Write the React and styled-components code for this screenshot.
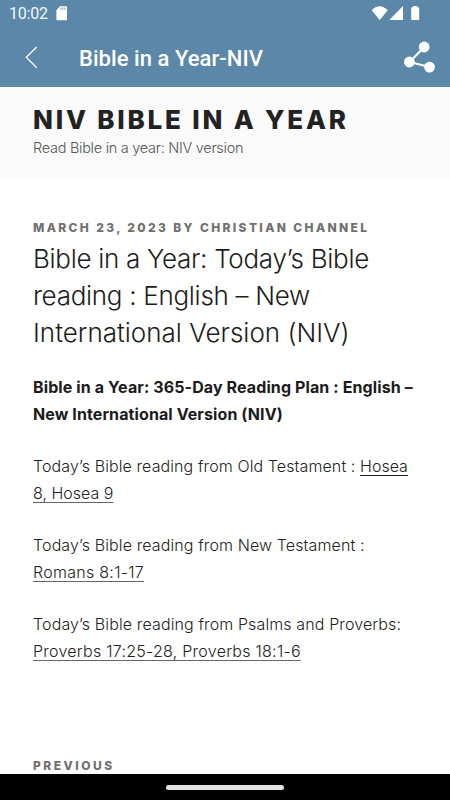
import React from "react";
import styled, { createGlobalStyle } from "styled-components";

const GlobalStyle = createGlobalStyle`
  * { box-sizing: border-box; }
  body { margin: 0; background: #fff; overflow: hidden; }
`;

const Screen = styled.div`
  width: 450px;
  height: 800px;
  display: flex;
  flex-direction: column;
  overflow: hidden;
  background: #fff;
  font-family: Inter, "Liberation Sans", sans-serif;
`;

const TopBar = styled.header`
  height: 87px;
  flex: none;
  background: #5b88a8;
  color: #fff;
  font-family: Roboto, sans-serif;
`;

const StatusBar = styled.div`
  height: 28px;
  padding: 0 29px 0 9px;
  display: flex;
  align-items: center;
  justify-content: space-between;
`;

const StatusGroup = styled.div`
  display: flex;
  align-items: center;
`;

const Clock = styled.span`
  font-size: 16px;
  line-height: 28px;
  width: 47px;
  letter-spacing: -0.2px;
  color: #f2f6f9;
`;

const Toolbar = styled.div`
  height: 57px;
  padding: 0 14px 0 25px;
  display: flex;
  align-items: center;
`;

const ScreenTitle = styled.h1`
  flex: 1;
  margin: 5px 0 0 40px;
  font-size: 22px;
  font-weight: 500;
  line-height: 28px;
  letter-spacing: 0.05px;
`;

const Icon = styled.svg`
  display: block;
  flex: none;
`;

const SiteHeader = styled.section`
  height: 90px;
  flex: none;
  padding: 17px 33px 0;
  background: #fafafa;
`;

const SiteName = styled.h2`
  margin: 0;
  font-size: 26px;
  font-weight: 800;
  line-height: 31.5px;
  letter-spacing: 2.8px;
  color: #222;
  white-space: nowrap;
`;

const Tagline = styled.p`
  margin: 2px 0 0;
  font-size: 14.5px;
  font-weight: 300;
  line-height: 20px;
  letter-spacing: -0.28px;
  color: #555;
`;

const Article = styled.main`
  flex: 1;
  min-height: 0;
  overflow: hidden;
  padding: 41px 33px 0;
`;

const Meta = styled.div`
  font-size: 12px;
  font-weight: 800;
  line-height: 20px;
  letter-spacing: ${(p) => p.$spacing}px;
  color: #707070;
  white-space: nowrap;
`;

const PostTitle = styled.h3`
  margin: 3.3px 0 22.2px;
  font-size: 26px;
  font-weight: 300;
  line-height: 36.7px;
  color: #1c1c1c;
`;

const Body = styled.div`
  display: flex;
  flex-direction: column;
  gap: 24.1px;
  margin-bottom: 90.3px;
`;

const Paragraph = styled.p`
  margin: 0;
  font-size: 16px;
  font-weight: ${(p) => (p.$strong ? 700 : 300)};
  line-height: 27.5px;
  color: ${(p) => (p.$strong ? "#1b1b1b" : "#222")};
`;

const Line = styled.span`
  display: block;
  white-space: pre;
  letter-spacing: ${(p) => p.$spacing || 0}px;
`;

const Link = styled.a`
  letter-spacing: ${(p) => p.$spacing || 0}px;
  text-decoration: underline;
  text-decoration-color: ${(p) => (p.$dark ? "#222" : "#666")};
  text-decoration-thickness: 1px;
  text-underline-offset: 3px;
  text-decoration-skip-ink: none;
`;

const NavBar = styled.footer`
  height: 26px;
  flex: none;
  background: #000;
  display: flex;
  justify-content: center;
  padding-top: 10.5px;
`;

const HomeHandle = styled.div`
  width: 118.5px;
  height: 5px;
  border-radius: 3px;
  background: #e4e4e4;
`;

const SdCardIcon = () => (
  <Icon width="12" height="16" viewBox="0 0 12 16">
    <path d="M4 0.3H10a1 1 0 0 1 1 1V13.3a1 1 0 0 1-1 1H1.4a1 1 0 0 1-1-1V4.3Z" fill="#fff" />
    <path d="M4.8 1.6V3.8M6.8 1.6V3.8M8.8 1.6V3.8" stroke="#86a6be" strokeWidth="1.1" />
  </Icon>
);

const SignalIcons = () => (
  <Icon width="50" height="16" viewBox="0 1 50 16" fill="#fff">
    <path d="M0.6 5.2Q8.5-2.6 16.7 5.2L8.7 14.9Z" />
    <path d="M32 1V15H18.3Z" />
    <path d="M42.2 1h4v1.2h1.2q.8 0 .8.8v11q0 .9-.9.9h-6.2q-.9 0-.9-.9V3q0-.8.8-.8h1.2Z" />
  </Icon>
);

const BackIcon = () => (
  <Icon width="14" height="24" viewBox="0 0 14 24">
    <path d="M11.7 2L1.3 12.3L11.7 22.7" fill="none" stroke="#fff" strokeWidth="1.25" />
  </Icon>
);

const ShareIcon = () => (
  <Icon width="32" height="34" viewBox="0 0 32 34">
    <path d="M20.4 7L5.5 22L25.4 27" fill="none" stroke="#fff" strokeWidth="2" />
    <circle cx="20.2" cy="7" r="5.4" fill="#fff" />
    <circle cx="5.4" cy="22" r="5.4" fill="#fff" />
    <circle cx="25.5" cy="27.1" r="5.4" fill="#fff" />
  </Icon>
);

export default function App() {
  return (
    <>
      <GlobalStyle />
      <Screen>
        <TopBar>
          <StatusBar>
            <StatusGroup>
              <Clock>10:02</Clock>
              <SdCardIcon />
            </StatusGroup>
            <SignalIcons />
          </StatusBar>
          <Toolbar>
            <BackIcon />
            <ScreenTitle>Bible in a Year-NIV</ScreenTitle>
            <ShareIcon />
          </Toolbar>
        </TopBar>
        <SiteHeader>
          <SiteName>NIV BIBLE IN A YEAR</SiteName>
          <Tagline>Read Bible in a year: NIV version</Tagline>
        </SiteHeader>
        <Article>
          <Meta $spacing={2.36}>MARCH 23, 2023 BY CHRISTIAN CHANNEL</Meta>
          <PostTitle>
            <Line $spacing={-0.3}>Bible in a Year: Today’s Bible</Line>
            <Line $spacing={-0.29}>reading : English – New</Line>
            <Line $spacing={0.01}>International Version (NIV)</Line>
          </PostTitle>
          <Body>
            <Paragraph $strong>
              <Line $spacing={0.11}>Bible in a Year: 365-Day Reading Plan : English –</Line>
              <Line $spacing={0.1}>New International Version (NIV)</Line>
            </Paragraph>
            <Paragraph>
              <Line $spacing={0.1}>
                Today’s Bible reading from Old Testament : <Link $dark>Hosea</Link>
              </Line>
              <Line><Link>8, Hosea 9</Link></Line>
            </Paragraph>
            <Paragraph>
              <Line $spacing={0.11}>Today’s Bible reading from New Testament :</Line>
              <Line><Link $spacing={0.28}>Romans 8:1-17</Link></Line>
            </Paragraph>
            <Paragraph>
              <Line $spacing={0.12}>Today’s Bible reading from Psalms and Proverbs:</Line>
              <Line><Link $spacing={0.26}>Proverbs 17:25-28, Proverbs 18:1-6</Link></Line>
            </Paragraph>
          </Body>
          <Meta $spacing={2.5}>PREVIOUS</Meta>
        </Article>
        <NavBar>
          <HomeHandle />
        </NavBar>
      </Screen>
    </>
  );
}
